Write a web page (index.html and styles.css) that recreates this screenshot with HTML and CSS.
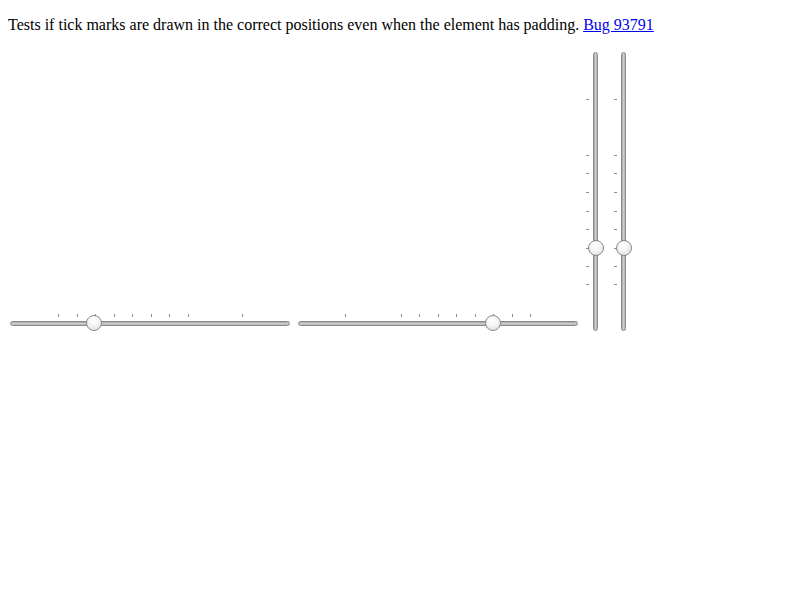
FILE: index.html
```html
<!DOCTYPE html>
<html>
<head>
<meta charset="utf-8">
<link rel="stylesheet" href="styles.css">
</head>
<body>
<p class="intro">Tests if tick marks are drawn in the correct positions even when the element has padding. <a href="#">Bug 93791</a></p>
<div class="row">
  <div class="hslider">
    <div class="htrack"></div>
    <span class="htick" style="left:48px"></span>
    <span class="htick" style="left:67px"></span>
    <span class="htick" style="left:85px"></span>
    <span class="htick" style="left:104px"></span>
    <span class="htick" style="left:122px"></span>
    <span class="htick" style="left:141px"></span>
    <span class="htick" style="left:159px"></span>
    <span class="htick" style="left:178px"></span>
    <span class="htick" style="left:232px"></span>
    <div class="hthumb" style="left:76px"></div>
  </div>
  <div class="hslider">
    <div class="htrack"></div>
    <span class="htick" style="left:47px"></span>
    <span class="htick" style="left:103px"></span>
    <span class="htick" style="left:121px"></span>
    <span class="htick" style="left:140px"></span>
    <span class="htick" style="left:158px"></span>
    <span class="htick" style="left:177px"></span>
    <span class="htick" style="left:195px"></span>
    <span class="htick" style="left:214px"></span>
    <span class="htick" style="left:232px"></span>
    <div class="hthumb" style="left:187px"></div>
  </div>
  <div class="vslider">
    <div class="vtrack"></div>
    <span class="vtick" style="top:47px"></span>
    <span class="vtick" style="top:103px"></span>
    <span class="vtick" style="top:121px"></span>
    <span class="vtick" style="top:140px"></span>
    <span class="vtick" style="top:159px"></span>
    <span class="vtick" style="top:177px"></span>
    <span class="vtick" style="top:196px"></span>
    <span class="vtick" style="top:214px"></span>
    <span class="vtick" style="top:232px"></span>
    <div class="vthumb" style="top:188px"></div>
  </div>
  <div class="vslider">
    <div class="vtrack"></div>
    <span class="vtick" style="top:47px"></span>
    <span class="vtick" style="top:103px"></span>
    <span class="vtick" style="top:121px"></span>
    <span class="vtick" style="top:140px"></span>
    <span class="vtick" style="top:159px"></span>
    <span class="vtick" style="top:177px"></span>
    <span class="vtick" style="top:196px"></span>
    <span class="vtick" style="top:214px"></span>
    <span class="vtick" style="top:232px"></span>
    <div class="vthumb" style="top:188px"></div>
  </div>
</div>
</body>
</html>
```
FILE: styles.css
```css
html, body {
  background: #fff;
}
body {
  margin: 8px;
  font-family: "Liberation Serif", "Times New Roman", serif;
  font-size: 16px;
  color: #000;
}
.intro {
  margin: 8px 0 16px;
}
.intro a {
  color: #0000ee;
  text-decoration: underline;
}
.row {
  display: flex;
  align-items: flex-end;
  padding-left: 2px;
  height: 281px;
}
.hslider {
  position: relative;
  width: 280px;
  height: 21px;
  margin-right: 8px;
}
.htrack {
  position: absolute;
  left: 0;
  right: 0;
  top: 11px;
  height: 5px;
  box-sizing: border-box;
  border: 1px solid #8a8a8a;
  border-radius: 3px;
  background: linear-gradient(to bottom, #9e9e9e 0%, #c8c8c8 45%, #d8d8d8 60%, #a8a8a8 100%);
}
.htick {
  position: absolute;
  top: 4px;
  width: 1px;
  height: 3px;
  background: #8c8c8c;
}
.hthumb {
  position: absolute;
  top: 5px;
  width: 16px;
  height: 16px;
  box-sizing: border-box;
  border: 1px solid #8a8a8a;
  border-radius: 50%;
  background: radial-gradient(circle at 45% 30%, #ffffff 0%, #f4f4f4 45%, #d8d8d8 100%);
}
.vslider {
  position: relative;
  width: 20px;
  height: 279px;
}
.vslider + .vslider {
  margin-left: 8px;
}
.vtrack {
  position: absolute;
  top: 0;
  bottom: 0;
  left: 7px;
  width: 5px;
  box-sizing: border-box;
  border: 1px solid #8a8a8a;
  border-radius: 3px;
  background: linear-gradient(to right, #9e9e9e 0%, #c8c8c8 45%, #d8d8d8 60%, #a8a8a8 100%);
}
.vtick {
  position: absolute;
  left: 0;
  width: 3px;
  height: 1px;
  background: #8c8c8c;
}
.vthumb {
  position: absolute;
  left: 2px;
  width: 16px;
  height: 16px;
  box-sizing: border-box;
  border: 1px solid #8a8a8a;
  border-radius: 50%;
  background: radial-gradient(circle at 45% 30%, #ffffff 0%, #f4f4f4 45%, #d8d8d8 100%);
}
```
